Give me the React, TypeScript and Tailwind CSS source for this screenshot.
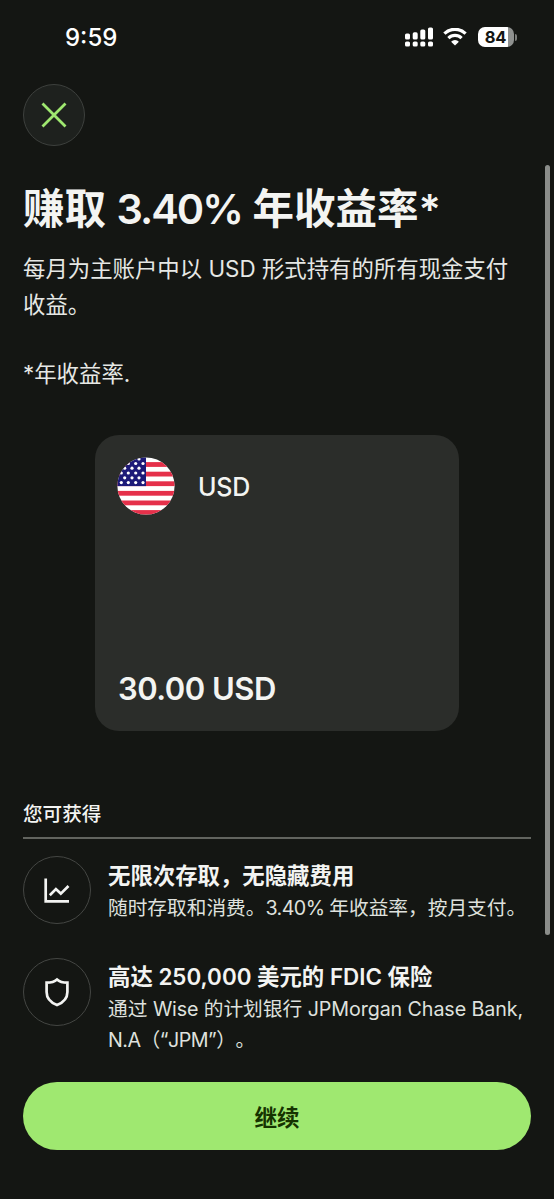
import type { ReactNode } from 'react';

interface FeatureProps {
    icon: ReactNode;
    title: string;
    children: ReactNode;
}

// Filas de estrellas del cantón, alternadas
const starRows = [
    { y: 2, xs: [15, 22] },
    { y: 6.5, xs: [11.3, 18.7, 26] },
    { y: 11.2, xs: [7.7, 15, 22] },
    { y: 16, xs: [4.3, 11.3, 18.7, 26] },
    { y: 20.8, xs: [7.7, 15, 22] },
    { y: 25.6, xs: [4.3, 11.3, 18.7, 26] },
];

const stripes = [1, 3, 5, 7, 9, 11];

function StatusBar() {
    return (
        <div className="flex h-[84px] items-start justify-between pt-[22px] pr-[37px] pl-[65px]">
            <span className="pt-[1px] text-[24px] leading-[30px] font-medium text-white">
                9:59
            </span>
            <div className="flex h-[30px] items-center">
                <svg width="29" height="20" viewBox="0 0 29 20" fill="#fff">
                    <rect x="0" y="6.5" width="5" height="6" rx="1.6" />
                    <rect x="7.7" y="5.3" width="5" height="7.2" rx="1.6" />
                    <rect x="15.3" y="2.5" width="5" height="10" rx="1.6" />
                    <rect x="23" y="0.5" width="5" height="12" rx="1.6" />
                    <rect x="0" y="14.5" width="5" height="5" rx="1.6" />
                    <rect x="7.7" y="14.5" width="5" height="5" rx="1.6" />
                    <rect x="15.3" y="14.5" width="5" height="5" rx="1.6" />
                    <rect x="23" y="14.5" width="5" height="5" rx="1.6" />
                </svg>
                <svg
                    className="ml-[9px]"
                    width="24"
                    height="18"
                    viewBox="0 0 24 18"
                    fill="none"
                    stroke="#fff"
                    strokeWidth="3.2"
                >
                    <path d="M1.4 5.6a15.2 15.2 0 0 1 21.2 0" />
                    <path d="M5.4 10.1a9.5 9.5 0 0 1 13.2 0" />
                    <path
                        d="M12 17.6 8.1 13.7a5.6 5.6 0 0 1 7.8 0Z"
                        fill="#fff"
                        stroke="none"
                    />
                </svg>
                <div className="ml-[11px] flex h-5 w-[36px] items-center justify-center overflow-hidden rounded-[7px] bg-linear-to-r from-white from-83% to-[#8f918f] to-83%">
                    <span className="pr-[1px] text-[16.5px] leading-5 font-bold tracking-[-0.3px] text-[#141613]">
                        84
                    </span>
                </div>
                <div className="ml-[1px] h-[7px] w-[2px] rounded-r-full bg-[#7c7e7b]" />
            </div>
        </div>
    );
}

function UsFlag() {
    return (
        <svg width="58" height="58" viewBox="0 0 58 58">
            <clipPath id="flag">
                <circle cx="29" cy="29" r="28.6" />
            </clipPath>
            <g clipPath="url(#flag)">
                <rect width="58" height="58" fill="#fff" />
                {stripes.map((n) => (
                    <rect
                        key={n}
                        y={n * 4.8 + 0.3}
                        width="58"
                        height="4.8"
                        fill="#e5304a"
                    />
                ))}
                <rect width="29" height="29.1" fill="#1d1a78" />
                {starRows.map((row) =>
                    row.xs.map((x) => (
                        <circle
                            key={`${x}-${row.y}`}
                            cx={x}
                            cy={row.y}
                            r="1.6"
                            fill="#fff"
                        />
                    )),
                )}
            </g>
        </svg>
    );
}

function Feature({ icon, title, children }: FeatureProps) {
    return (
        <div className="flex items-center gap-[17px]">
            <div className="flex h-[68px] w-[68px] shrink-0 items-center justify-center self-start rounded-full border-[1.5px] border-[#444643]">
                {icon}
            </div>
            <div className="whitespace-nowrap">
                <h3 className="pt-1 text-[22.4px] leading-[30px] font-semibold text-[#f3f4f2]">
                    {title}
                </h3>
                <p className="mt-[2px] text-[19.7px] leading-[31px] text-[#dfe1de] [text-spacing-trim:space-all]">
                    {children}
                </p>
            </div>
        </div>
    );
}

export default function App() {
    return (
        <div className="relative flex h-[1199px] w-[554px] flex-col overflow-hidden bg-[#141613] font-['Inter','Noto_Sans_CJK_SC',sans-serif] text-[#f3f4f2]">
            <StatusBar />

            <main className="flex flex-1 flex-col px-[23px]">
                <button
                    type="button"
                    aria-label="关闭"
                    className="flex h-[62px] w-[62px] items-center justify-center rounded-full border border-[#3d403d] bg-[#1e211e]"
                >
                    <svg
                        width="26"
                        height="26"
                        viewBox="0 0 26 26"
                        stroke="#9fe870"
                        strokeWidth="2.8"
                    >
                        <path d="M1.5 1.5l23 23M24.5 1.5l-23 23" />
                    </svg>
                </button>

                <h1 className="mt-[37px] text-[41.5px] leading-[52px] font-semibold whitespace-nowrap">
                    赚取 <span className="tracking-[-2px]">3.40%</span>{' '}
                    年收益率*
                </h1>
                <p className="mt-[16px] text-[22.4px] leading-[36px] whitespace-nowrap text-[#e6e8e5]">
                    每月为主账户中以 USD 形式持有的所有现金支付
                    <br />
                    收益。
                </p>
                <p className="mt-[33px] text-[22.4px] leading-[36px] text-[#e6e8e5]">
                    *年收益率.
                </p>

                {/* Tarjeta del saldo */}
                <section className="mx-auto mt-[43px] flex h-[296px] w-[364px] flex-col justify-between rounded-[24px] bg-[#2b2d2a] px-[22px] pt-[22px] pb-[22px]">
                    <div className="flex items-center gap-[23px]">
                        <UsFlag />
                        <span className="pt-1 text-[25px] font-medium tracking-[-0.2px]">
                            USD
                        </span>
                    </div>
                    <div className="pl-[1px] text-[31px] leading-[40px] font-semibold tracking-[-0.5px]">
                        30.00 USD
                    </div>
                </section>

                <h2 className="mt-[68px] border-b-2 border-[#62645f] pb-[8px] text-[19.6px] leading-[30px] font-medium">
                    您可获得
                </h2>

                <div className="mt-[17px] flex flex-col gap-[34px]">
                    <Feature
                        icon={
                            <svg
                                width="26"
                                height="26"
                                viewBox="0 0 26 26"
                                fill="none"
                                stroke="#f3f4f2"
                                strokeWidth="2.7"
                            >
                                <path d="M1.7 1.5V24.3H25" />
                                <path d="M5.8 18.2l6.1-6.1 4.9 4.5L24.5 9" />
                            </svg>
                        }
                        title="无限次存取，无隐藏费用"
                    >
                        随时存取和消费。
                        <span className="tracking-[-0.6px]">3.40% </span>
                        年收益率，按月支付。
                    </Feature>
                    <Feature
                        icon={
                            <svg
                                width="26"
                                height="30"
                                viewBox="0 0 26 30"
                                fill="none"
                                stroke="#f3f4f2"
                                strokeWidth="2.7"
                            >
                                <path d="M13 2.5C10.6 4.7 7 5.7 2.6 5.7V15C2.6 21.3 6.8 25.6 13 28.1 19.2 25.6 23.4 21.3 23.4 15V5.7C19 5.7 15.4 4.7 13 2.5Z" />
                            </svg>
                        }
                        title="高达 250,000 美元的 FDIC 保险"
                    >
                        通过 <span className="tracking-[-0.2px]">Wise</span>{' '}
                        的计划银行{' '}
                        <span className="tracking-[-0.1px]">
                            JPMorgan Chase Bank,
                        </span>
                        <br />
                        <span className="tracking-[-0.5px]">
                            N.A（“JPM”）。
                        </span>
                    </Feature>
                </div>
            </main>

            <footer className="px-[23px] pb-[49px]">
                <button
                    type="button"
                    className="h-[68px] w-full rounded-full bg-[#9fe870] pt-[3px] text-[22.6px] font-semibold text-[#163300]"
                >
                    继续
                </button>
            </footer>

            {/* Indicador de desplazamiento */}
            <div className="absolute top-[165px] right-[4px] h-[770px] w-[5px] rounded-full bg-[#8b8d8a]" />
        </div>
    );
}
